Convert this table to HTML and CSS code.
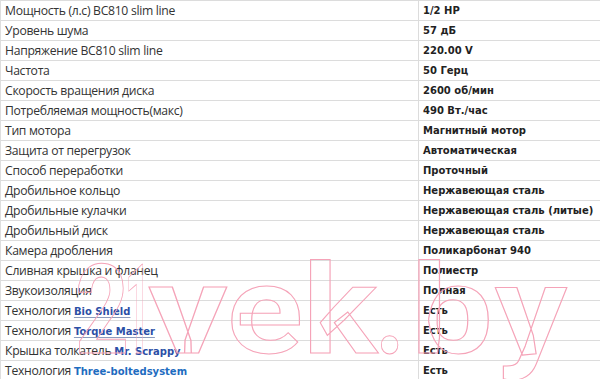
FILE: index.html
```html
<!DOCTYPE html>
<html lang="ru">
<head>
<meta charset="utf-8">
<title>Характеристики</title>
<link rel="stylesheet" href="styles.css">
</head>
<body>
<div class="specs">
  <div class="row"><div class="name">Мощность (л.с) BC810 slim line</div><div class="val">1/2 HP</div></div>
  <div class="row"><div class="name">Уровень шума</div><div class="val">57 дБ</div></div>
  <div class="row"><div class="name">Напряжение BC810 slim line</div><div class="val">220.00 V</div></div>
  <div class="row"><div class="name">Частота</div><div class="val">50 Герц</div></div>
  <div class="row"><div class="name">Скорость вращения диска</div><div class="val">2600 об/мин</div></div>
  <div class="row"><div class="name">Потребляемая мощность(макс)</div><div class="val">490 Вт./час</div></div>
  <div class="row"><div class="name">Тип мотора</div><div class="val">Магнитный мотор</div></div>
  <div class="row"><div class="name">Защита от перегрузок</div><div class="val">Автоматическая</div></div>
  <div class="row"><div class="name">Способ переработки</div><div class="val">Проточный</div></div>
  <div class="row"><div class="name">Дробильное кольцо</div><div class="val">Нержавеющая сталь</div></div>
  <div class="row"><div class="name">Дробильные кулачки</div><div class="val">Нержавеющая сталь (литые)</div></div>
  <div class="row"><div class="name">Дробильный диск</div><div class="val">Нержавеющая сталь</div></div>
  <div class="row"><div class="name">Камера дробления</div><div class="val">Поликарбонат 940</div></div>
  <div class="row"><div class="name">Сливная крышка и фланец</div><div class="val">Полиестр</div></div>
  <div class="row"><div class="name">Звукоизоляция</div><div class="val">Полная</div></div>
  <div class="row"><div class="name">Технология <a class="link ul">Bio Shield</a></div><div class="val">Есть</div></div>
  <div class="row"><div class="name">Технология <a class="link ul">Torque Master</a></div><div class="val">Есть</div></div>
  <div class="row"><div class="name">Крышка толкатель <a class="link">Mr. Scrappy</a></div><div class="val">Есть</div></div>
  <div class="row"><div class="name">Технология <a class="link light">Three-boltedsystem</a></div><div class="val">Есть</div></div>
  <svg class="watermark" width="600" height="379" viewBox="0 0 600 379" aria-hidden="true">
    <text x="74" y="353" textLength="54" lengthAdjust="spacingAndGlyphs">2</text>
    <text x="124" y="353" textLength="26" lengthAdjust="spacingAndGlyphs">1</text>
    <text x="147" y="353" textLength="80" lengthAdjust="spacingAndGlyphs">v</text>
    <text x="226" y="353" textLength="76" lengthAdjust="spacingAndGlyphs">e</text>
    <text x="302" y="353" textLength="74" lengthAdjust="spacingAndGlyphs">k</text>
    <text x="374" y="353" textLength="30" lengthAdjust="spacingAndGlyphs">.</text>
    <text x="410" y="353" textLength="82" lengthAdjust="spacingAndGlyphs">b</text>
    <text x="494" y="353" textLength="72" lengthAdjust="spacingAndGlyphs">y</text>
  </svg>
</div>
</body>
</html>
```
FILE: styles.css
```css
html, body {
  margin: 0;
  padding: 0;
  background: #fff;
}
.specs {
  position: relative;
  width: 600px;
  height: 379px;
  overflow: hidden;
  border-left: 1px solid #dedede;
  box-sizing: border-box;
}
.row {
  display: grid;
  grid-template-columns: 417px 1fr;
  height: 20px;
  box-sizing: border-box;
  border-top: 1px solid #dcdcdc;
}
.name {
  padding: 0 0 0 4px;
  font-family: "Open Sans", sans-serif;
  font-size: 12.2px;
  letter-spacing: -0.3px;
  line-height: 19px;
  color: #333;
  white-space: nowrap;
}
.val {
  border-left: 1px solid #dcdcdc;
  padding-left: 4px;
  font-family: "DejaVu Sans", sans-serif;
  font-weight: bold;
  font-size: 10px;
  line-height: 19px;
  color: #222;
  white-space: nowrap;
}
.link {
  font-family: "DejaVu Sans", sans-serif;
  font-weight: bold;
  font-size: 10px;
  letter-spacing: 0;
  color: #2c4fa6;
  text-decoration: none;
}
.link.ul {
  text-decoration: underline;
  text-decoration-color: #8c9bbd;
  text-underline-offset: 2px;
}
.link.light {
  color: #1e6cc0;
}
.watermark {
  position: absolute;
  left: 0;
  top: 0;
  pointer-events: none;
}
.watermark text {
  font-family: Roboto, sans-serif;
  font-weight: bold;
  font-size: 124px;
  fill: none;
  stroke: #f5a3b8;
  stroke-width: 1;
}
```
